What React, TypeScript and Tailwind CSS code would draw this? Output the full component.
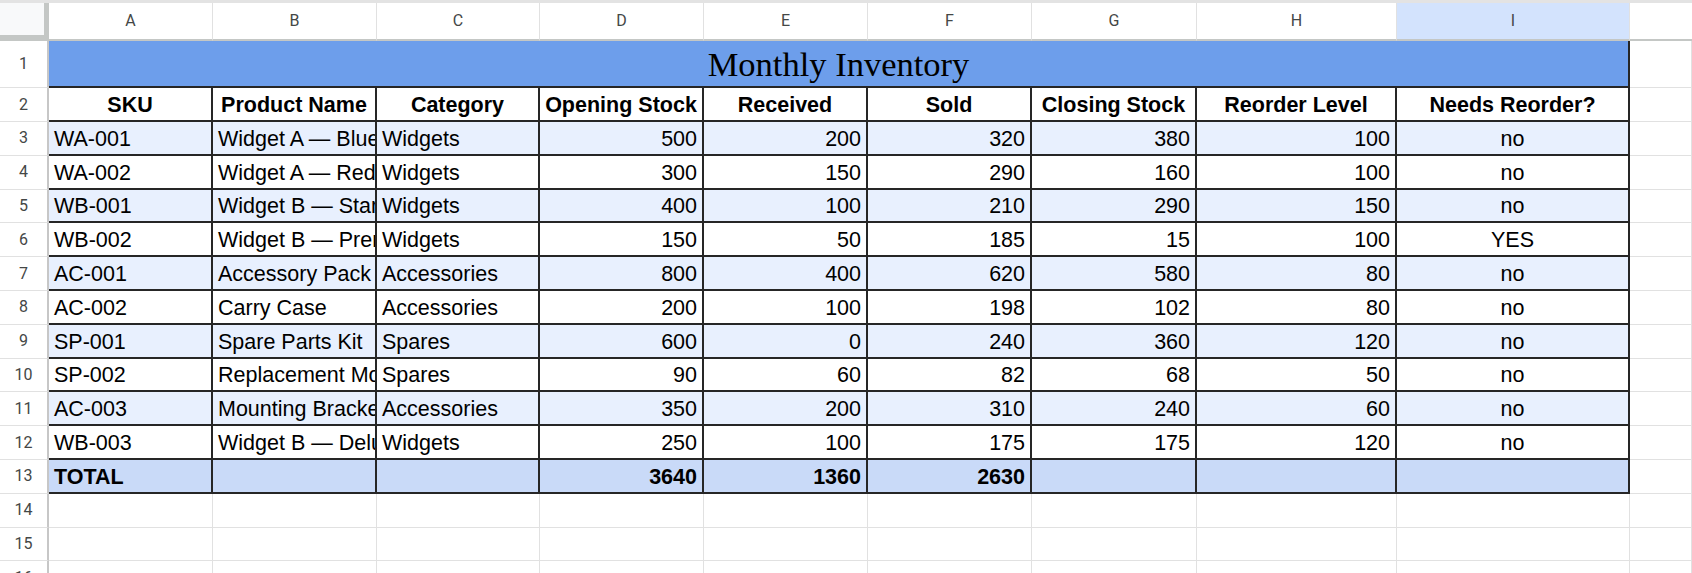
import React from "react";

type Item = {
  sku: string;
  name: string;
  category: string;
  opening: number;
  received: number;
  sold: number;
  closing: number;
  reorder: number;
  needs: string;
};

const items: Item[] = [
  { sku: "WA-001", name: "Widget A — Blue", category: "Widgets", opening: 500, received: 200, sold: 320, closing: 380, reorder: 100, needs: "no" },
  { sku: "WA-002", name: "Widget A — Red", category: "Widgets", opening: 300, received: 150, sold: 290, closing: 160, reorder: 100, needs: "no" },
  { sku: "WB-001", name: "Widget B — Standard", category: "Widgets", opening: 400, received: 100, sold: 210, closing: 290, reorder: 150, needs: "no" },
  { sku: "WB-002", name: "Widget B — Premium", category: "Widgets", opening: 150, received: 50, sold: 185, closing: 15, reorder: 100, needs: "YES" },
  { sku: "AC-001", name: "Accessory Pack", category: "Accessories", opening: 800, received: 400, sold: 620, closing: 580, reorder: 80, needs: "no" },
  { sku: "AC-002", name: "Carry Case", category: "Accessories", opening: 200, received: 100, sold: 198, closing: 102, reorder: 80, needs: "no" },
  { sku: "SP-001", name: "Spare Parts Kit", category: "Spares", opening: 600, received: 0, sold: 240, closing: 360, reorder: 120, needs: "no" },
  { sku: "SP-002", name: "Replacement Module", category: "Spares", opening: 90, received: 60, sold: 82, closing: 68, reorder: 50, needs: "no" },
  { sku: "AC-003", name: "Mounting Bracket", category: "Accessories", opening: 350, received: 200, sold: 310, closing: 240, reorder: 60, needs: "no" },
  { sku: "WB-003", name: "Widget B — Deluxe", category: "Widgets", opening: 250, received: 100, sold: 175, closing: 175, reorder: 120, needs: "no" },
];

const headers = [
  "SKU",
  "Product Name",
  "Category",
  "Opening Stock",
  "Received",
  "Sold",
  "Closing Stock",
  "Reorder Level",
  "Needs Reorder?",
];

const letters = ["A", "B", "C", "D", "E", "F", "G", "H", "I"];

function RowNum({ n }: { n: number }) {
  return (
    <div className="flex items-center justify-center border-r-2 border-b border-r-[#c7c7c7] border-b-[#e1e1e1] bg-white font-['Roboto',sans-serif] text-[16px] text-[#444746]">
      {n}
    </div>
  );
}

function Blank() {
  return <div className="border-r border-b border-[#e1e1e1] bg-white" />;
}

function Cell({
  children,
  align = "left",
  bold = false,
  bg = "bg-white",
}: {
  children?: React.ReactNode;
  align?: "left" | "right" | "center";
  bold?: boolean;
  bg?: string;
}) {
  const justify =
    align === "right" ? "justify-end" : align === "center" ? "justify-center" : "justify-start";
  return (
    <div
      className={`flex items-center overflow-hidden whitespace-nowrap border-r-2 border-b-2 border-[#262626] px-[5px] pt-[2px] text-[21.5px] text-black ${justify} ${bg} ${bold ? "font-bold" : ""}`}
    >
      {children}
    </div>
  );
}

export default function App() {
  return (
    <div className="h-[573px] w-[1692px] overflow-hidden bg-white font-['Liberation_Sans',Arial,sans-serif]">
      <div className="h-[3px] bg-[#e3e3e3]" />
      <div className="grid grid-cols-[49px_164px_164px_163px_164px_164px_164px_165px_200px_233px_1fr] grid-rows-[38px_47px_34px_repeat(14,33.8px)]">
        {/* column letters */}
        <div className="flex">
          <div className="box-content h-[32px] w-[44px] border-r-[5px] border-b-[6px] border-[#c4c7c5] bg-[#f8f9fa]" />
        </div>
        {letters.map((l) => (
          <div
            key={l}
            className={`flex items-center justify-center border-r border-b-2 border-r-[#e1e1e1] border-b-[#c4c7c5] font-['Roboto',sans-serif] text-[16px] text-[#444746] ${
              l === "I" ? "bg-[#d3e3fd]" : "bg-white"
            }`}
          >
            {l}
          </div>
        ))}
        <div className="border-b-2 border-b-[#c4c7c5] bg-white" />

        {/* row 1: title */}
        <RowNum n={1} />
        <div className="col-span-9 flex items-center justify-center border-r-2 border-b-2 border-[#262626] bg-[#6d9eeb] pt-[2px] font-['Liberation_Serif',serif] text-[34.5px] text-black">
          Monthly Inventory
        </div>
        <Blank />

        {/* row 2: headers */}
        <RowNum n={2} />
        {headers.map((h) => (
          <Cell key={h} align="center" bold>
            {h}
          </Cell>
        ))}
        <Blank />

        {/* data rows */}
        {items.map((it, i) => {
          const bg = i % 2 === 0 ? "bg-[#e8f0fe]" : "bg-white";
          return (
            <React.Fragment key={it.sku}>
              <RowNum n={i + 3} />
              <Cell bg={bg}>{it.sku}</Cell>
              <Cell bg={bg}>{it.name}</Cell>
              <Cell bg={bg}>{it.category}</Cell>
              <Cell bg={bg} align="right">{it.opening}</Cell>
              <Cell bg={bg} align="right">{it.received}</Cell>
              <Cell bg={bg} align="right">{it.sold}</Cell>
              <Cell bg={bg} align="right">{it.closing}</Cell>
              <Cell bg={bg} align="right">{it.reorder}</Cell>
              <Cell bg={bg} align="center">{it.needs}</Cell>
              <Blank />
            </React.Fragment>
          );
        })}

        {/* totals */}
        <RowNum n={13} />
        <Cell bg="bg-[#c9daf8]" bold>TOTAL</Cell>
        <Cell bg="bg-[#c9daf8]" />
        <Cell bg="bg-[#c9daf8]" />
        <Cell bg="bg-[#c9daf8]" align="right" bold>3640</Cell>
        <Cell bg="bg-[#c9daf8]" align="right" bold>1360</Cell>
        <Cell bg="bg-[#c9daf8]" align="right" bold>2630</Cell>
        <Cell bg="bg-[#c9daf8]" />
        <Cell bg="bg-[#c9daf8]" />
        <Cell bg="bg-[#c9daf8]" />
        <Blank />

        {/* empty rows */}
        {[14, 15, 16].map((n) => (
          <React.Fragment key={n}>
            <RowNum n={n} />
            {letters.map((l) => (
              <Blank key={l} />
            ))}
            <Blank />
          </React.Fragment>
        ))}
      </div>
    </div>
  );
}
